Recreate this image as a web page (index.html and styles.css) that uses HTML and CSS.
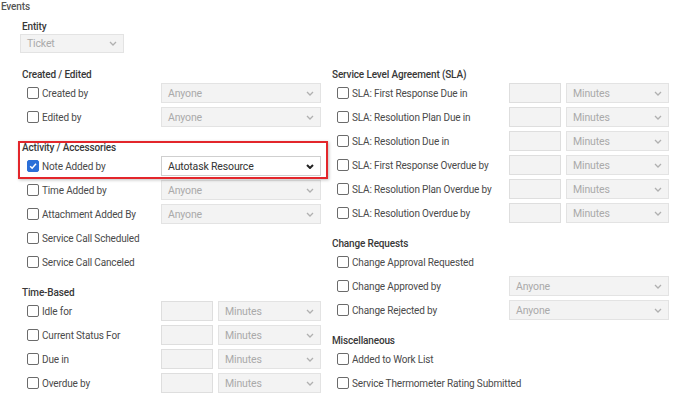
FILE: index.html
```html
<!DOCTYPE html>
<html>
<head>
<meta charset="utf-8">
<link rel="stylesheet" href="styles.css">
</head>
<body>
<div class="page">
  <div class="title">Events</div>
  <div class="entity">
    <div class="heading">Entity</div>
    <div class="select disabled small"><span>Ticket</span><svg class="chev" viewBox="0 0 8 5"><path d="M1 1 L4 4 L7 1"/></svg></div>
  </div>
  <div class="columns">
    <div class="col left">
      <div class="section">
        <div class="heading">Created / Edited</div>
        <div class="row"><label class="cb"><span class="box"></span>Created by</label><div class="select disabled"><span>Anyone</span><svg class="chev" viewBox="0 0 8 5"><path d="M1 1 L4 4 L7 1"/></svg></div></div>
        <div class="row"><label class="cb"><span class="box"></span>Edited by</label><div class="select disabled"><span>Anyone</span><svg class="chev" viewBox="0 0 8 5"><path d="M1 1 L4 4 L7 1"/></svg></div></div>
      </div>
      <div class="section">
        <div class="highlight">
          <div class="heading">Activity / Accessories</div>
          <div class="row"><label class="cb"><span class="box checked"><svg viewBox="0 0 12 12"><path d="M2.6 6.2 L5 8.6 L9.6 3.4"/></svg></span>Note Added by</label><div class="select active"><span>Autotask Resource</span><svg class="chev dark" viewBox="0 0 8 5"><path d="M1 1 L4 4 L7 1"/></svg></div></div>
        </div>
        <div class="row"><label class="cb"><span class="box"></span>Time Added by</label><div class="select disabled"><span>Anyone</span><svg class="chev" viewBox="0 0 8 5"><path d="M1 1 L4 4 L7 1"/></svg></div></div>
        <div class="row"><label class="cb"><span class="box"></span>Attachment Added By</label><div class="select disabled"><span>Anyone</span><svg class="chev" viewBox="0 0 8 5"><path d="M1 1 L4 4 L7 1"/></svg></div></div>
        <div class="row"><label class="cb"><span class="box"></span>Service Call Scheduled</label></div>
        <div class="row"><label class="cb"><span class="box"></span>Service Call Canceled</label></div>
      </div>
      <div class="section">
        <div class="heading">Time-Based</div>
        <div class="row"><label class="cb"><span class="box"></span>Idle for</label><div class="pair"><div class="input"></div><div class="select disabled"><span>Minutes</span><svg class="chev" viewBox="0 0 8 5"><path d="M1 1 L4 4 L7 1"/></svg></div></div></div>
        <div class="row"><label class="cb"><span class="box"></span>Current Status For</label><div class="pair"><div class="input"></div><div class="select disabled"><span>Minutes</span><svg class="chev" viewBox="0 0 8 5"><path d="M1 1 L4 4 L7 1"/></svg></div></div></div>
        <div class="row"><label class="cb"><span class="box"></span>Due in</label><div class="pair"><div class="input"></div><div class="select disabled"><span>Minutes</span><svg class="chev" viewBox="0 0 8 5"><path d="M1 1 L4 4 L7 1"/></svg></div></div></div>
        <div class="row"><label class="cb"><span class="box"></span>Overdue by</label><div class="pair"><div class="input"></div><div class="select disabled"><span>Minutes</span><svg class="chev" viewBox="0 0 8 5"><path d="M1 1 L4 4 L7 1"/></svg></div></div></div>
      </div>
    </div>
    <div class="col right">
      <div class="section">
        <div class="heading">Service Level Agreement (SLA)</div>
        <div class="row"><label class="cb"><span class="box"></span>SLA: First Response Due in</label><div class="pair"><div class="input"></div><div class="select disabled"><span>Minutes</span><svg class="chev" viewBox="0 0 8 5"><path d="M1 1 L4 4 L7 1"/></svg></div></div></div>
        <div class="row"><label class="cb"><span class="box"></span>SLA: Resolution Plan Due in</label><div class="pair"><div class="input"></div><div class="select disabled"><span>Minutes</span><svg class="chev" viewBox="0 0 8 5"><path d="M1 1 L4 4 L7 1"/></svg></div></div></div>
        <div class="row"><label class="cb"><span class="box"></span>SLA: Resolution Due in</label><div class="pair"><div class="input"></div><div class="select disabled"><span>Minutes</span><svg class="chev" viewBox="0 0 8 5"><path d="M1 1 L4 4 L7 1"/></svg></div></div></div>
        <div class="row"><label class="cb"><span class="box"></span>SLA: First Response Overdue by</label><div class="pair"><div class="input"></div><div class="select disabled"><span>Minutes</span><svg class="chev" viewBox="0 0 8 5"><path d="M1 1 L4 4 L7 1"/></svg></div></div></div>
        <div class="row"><label class="cb"><span class="box"></span>SLA: Resolution Plan Overdue by</label><div class="pair"><div class="input"></div><div class="select disabled"><span>Minutes</span><svg class="chev" viewBox="0 0 8 5"><path d="M1 1 L4 4 L7 1"/></svg></div></div></div>
        <div class="row"><label class="cb"><span class="box"></span>SLA: Resolution Overdue by</label><div class="pair"><div class="input"></div><div class="select disabled"><span>Minutes</span><svg class="chev" viewBox="0 0 8 5"><path d="M1 1 L4 4 L7 1"/></svg></div></div></div>
      </div>
      <div class="section">
        <div class="heading">Change Requests</div>
        <div class="row"><label class="cb"><span class="box"></span>Change Approval Requested</label></div>
        <div class="row"><label class="cb"><span class="box"></span>Change Approved by</label><div class="select disabled"><span>Anyone</span><svg class="chev" viewBox="0 0 8 5"><path d="M1 1 L4 4 L7 1"/></svg></div></div>
        <div class="row"><label class="cb"><span class="box"></span>Change Rejected by</label><div class="select disabled"><span>Anyone</span><svg class="chev" viewBox="0 0 8 5"><path d="M1 1 L4 4 L7 1"/></svg></div></div>
      </div>
      <div class="section">
        <div class="heading">Miscellaneous</div>
        <div class="row"><label class="cb"><span class="box"></span>Added to Work List</label></div>
        <div class="row"><label class="cb"><span class="box"></span>Service Thermometer Rating Submitted</label></div>
      </div>
    </div>
  </div>
</div>
</body>
</html>
```

FILE: styles.css
```css
html, body {
  margin: 0;
  padding: 0;
  background: #ffffff;
}
body {
  font-family: Roboto, "Liberation Sans", Arial, sans-serif;
  font-size: 10px;
  letter-spacing: -0.15px;
  color: #4a4a4a;
}
.page {
  width: 688px;
  height: 410px;
  overflow: hidden;
  padding-top: 1px;
}
.title {
  height: 12px;
  line-height: 12px;
  padding-left: 1px;
  color: #555555;
  font-weight: 500;
}
.entity {
  padding: 7px 0 0 20px;
}
.heading {
  height: 13px;
  line-height: 13px;
  padding-left: 2px;
  font-weight: 500;
  color: #383838;
}
.entity .select {
  margin-top: 1px;
}
.columns {
  display: grid;
  grid-template-columns: 310px 358px;
  margin-top: 15px;
  padding-left: 20px;
}
.section + .section {
  margin-top: 12px;
}
.row {
  height: 24px;
  display: grid;
  align-items: center;
}
.left .row {
  grid-template-columns: 141px 160px;
}
.right .row {
  grid-template-columns: 179px 160px;
}
.cb {
  display: flex;
  align-items: center;
  padding-left: 7px;
  white-space: nowrap;
  color: #4a4a4a;
}
.box {
  width: 10px;
  height: 10px;
  border: 1px solid #6b6b6b;
  border-radius: 2px;
  margin-right: 3px;
  background: #ffffff;
  flex: none;
}
.box.checked {
  background: #2b6fd8;
  border-color: #2b6fd8;
  display: flex;
}
.box.checked svg {
  width: 10px;
  height: 10px;
}
.box.checked path {
  fill: none;
  stroke: #ffffff;
  stroke-width: 1.8;
}
.select {
  box-sizing: border-box;
  height: 20px;
  display: flex;
  align-items: center;
  justify-content: space-between;
  padding: 0 6px 0 6px;
  border: 1px solid #e3e3e3;
  background: #f3f3f3;
  color: #aaaaaa;
  font-size: 10.5px;
}
.select.small {
  width: 104px;
  height: 19px;
}
.select.active {
  background: #ffffff;
  border-color: #cfcfcf;
  color: #333333;
}
.chev {
  width: 8px;
  height: 5px;
  flex: none;
}
.chev path {
  fill: none;
  stroke: #b0b0b0;
  stroke-width: 1.3;
}
.chev.dark path {
  stroke: #222222;
  stroke-width: 2;
}
.pair {
  display: grid;
  grid-template-columns: 52px 103px;
  column-gap: 5px;
}
.input {
  box-sizing: border-box;
  height: 20px;
  border: 1px solid #dedede;
  background: #f3f3f3;
}
.highlight {
  position: relative;
}
.highlight::after {
  content: "";
  position: absolute;
  left: -2px;
  right: 2px;
  top: 0;
  bottom: -1px;
  border: 2px solid #e3262b;
  box-shadow: 1px 1px 3px rgba(0, 0, 0, 0.25);
  pointer-events: none;
}
```
